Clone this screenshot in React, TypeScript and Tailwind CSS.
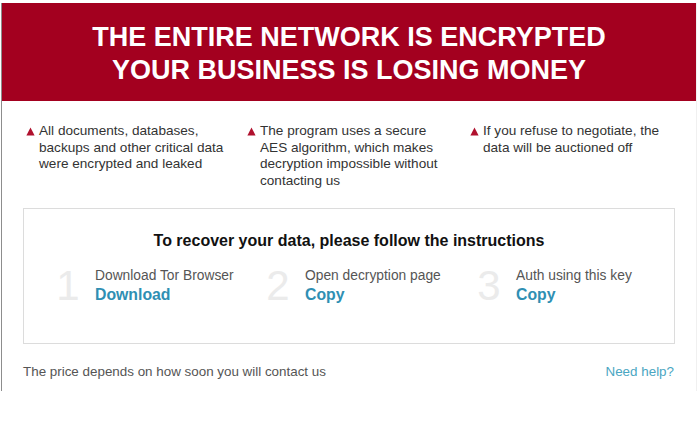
const bullets = [
  'All documents, databases, backups and other critical data were encrypted and leaked',
  'The program uses a secure AES algorithm, which makes decryption impossible without contacting us',
  'If you refuse to negotiate, the data will be auctioned off',
]

const steps = [
  { n: '1', label: 'Download Tor Browser', action: 'Download' },
  { n: '2', label: 'Open decryption page', action: 'Copy' },
  { n: '3', label: 'Auth using this key', action: 'Copy' },
]

export default function App() {
  return (
    <div className="w-[700px] h-[430px] bg-white font-['Liberation_Sans',Arial,sans-serif] overflow-hidden">
      <div className="ml-[1px] mt-[3px] w-[696px] h-[388px] border-l border-[#8d8d8d] border-r border-r-[#f0f0f0] flex flex-col">
        <div className="h-[98px] bg-[#a3001f] flex flex-col items-center justify-center pt-[3px] text-white font-bold text-[27px] leading-[33px]">
          <div>THE ENTIRE NETWORK IS ENCRYPTED</div>
          <div>YOUR BUSINESS IS LOSING MONEY</div>
        </div>

        <div className="grid grid-cols-[221px_223px_1fr] pl-[24px] pt-[22px] h-[107px]">
          {bullets.map((b, i) => (
            <div key={b} className={`flex items-start gap-[4px] ${i === 1 ? 'pr-[24px]' : 'pr-[8px]'}`}>
              <svg width="9" height="9" viewBox="0 0 9 9" className="mt-[4px] shrink-0">
                <path d="M4.5 0.5 L8.6 8.5 L0.4 8.5 Z" fill="#b0112e" />
              </svg>
              <p className="text-[13.6px] leading-[16.5px] text-[#333]">{b}</p>
            </div>
          ))}
        </div>

        <div className="mx-[21px] h-[136px] border border-[#dcdcdc] flex flex-col">
          <h2 className="text-center font-bold text-[16px] leading-[18px] text-[#111] pt-[23px]">
            To recover your data, please follow the instructions
          </h2>
          <div className="grid grid-cols-[210px_211px_1fr] pl-[26px] mt-[15px]">
            {steps.map((s) => (
              <div key={s.n} className="flex items-center">
                <div className="w-[36px] mr-[9px] text-center text-[42px] leading-[42px] text-[#ebebeb]">{s.n}</div>
                <div className="flex flex-col">
                  <span className="text-[13.8px] leading-[18px] text-[#555]">{s.label}</span>
                  <span className="text-[15.8px] leading-[20px] font-bold text-[#2f8fb3]">{s.action}</span>
                </div>
              </div>
            ))}
          </div>
        </div>

        <div className="flex justify-between items-center mx-[21px] mt-[20px] text-[13.4px] leading-[16px]">
          <span className="text-[#555]">The price depends on how soon you will contact us</span>
          <span className="text-[#4aa6c2] pr-[1px]">Need help?</span>
        </div>
      </div>
    </div>
  )
}
